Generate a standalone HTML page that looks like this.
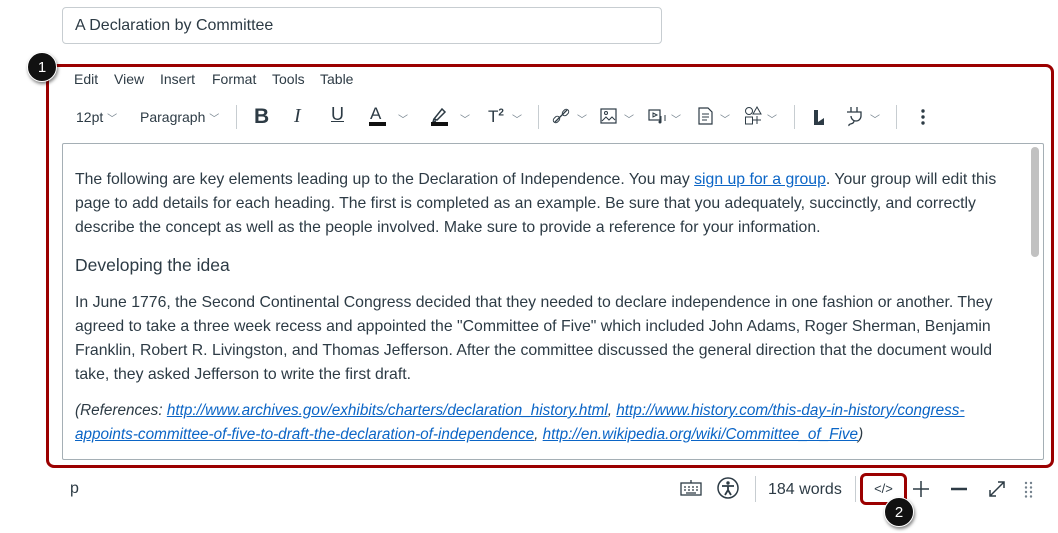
<!DOCTYPE html>
<html><head><meta charset="utf-8"><style>
*{box-sizing:border-box;margin:0;padding:0}
body{width:1058px;height:533px;background:#fff;font-family:"Liberation Sans",sans-serif;color:#2d3b45;position:relative;overflow:hidden}
.abs{position:absolute}
.title{left:62px;top:7px;width:600px;height:37px;border:1px solid #c7cdd1;border-radius:4px;font-size:16px;padding:9px 12px;color:#2d3b45}
.red{left:46px;top:64px;width:1008px;height:404px;border:3px solid #9b0000;border-radius:8px}
.badge{width:30px;height:30px;border-radius:50%;background:#111;color:#fff;font-size:15px;text-align:center;line-height:30px;box-shadow:1px 2px 3px rgba(0,0,0,.5);border:1.5px solid #fff}
.menu span{position:absolute;top:71px;font-size:14px;color:#2d3b45}
.tb{font-size:14px;color:#2d3b45}
.sep{width:1px;height:24px;background:#c7cdd1;top:105px}
.chev{font-size:10px;color:#73818c}
.content{left:62px;top:143px;width:982px;height:317px;border:1px solid #a5afb5;border-radius:2px;overflow:hidden}
.txt{position:absolute;left:12px;font-size:15.8px;white-space:nowrap;line-height:24px;color:#2d3b45}
a{color:#0b65c6;text-decoration:underline}
.scroll{right:4px;top:3px;width:8px;height:110px;background:#c1c1c1;border-radius:4px;position:absolute}
.foot{font-size:16px;color:#2d3b45}
</style></head><body>
<div class="abs title">A Declaration by Committee</div>
<div class="abs red"></div>
<div class="abs badge" style="left:27px;top:52px">1</div>
<div class="menu">
<span style="left:74px">Edit</span><span style="left:114px">View</span><span style="left:160px">Insert</span><span style="left:212px">Format</span><span style="left:272px">Tools</span><span style="left:320px">Table</span>
</div>
<div class="abs tb" style="left:76px;top:109px">12pt <span class="chev">﹀</span></div>
<div class="abs tb" style="left:140px;top:109px">Paragraph <span class="chev">﹀</span></div>
<div class="abs sep" style="left:236px"></div>
<div class="abs" style="left:254px;top:105px;font-size:21px;font-weight:bold">B</div>
<div class="abs" style="left:294px;top:105px;font-size:20px;font-style:italic;font-family:'Liberation Serif',serif">I</div>
<div class="abs" style="left:331px;top:104px;font-size:18px;text-decoration:underline">U</div>
<div class="abs" style="left:370px;top:104px;font-size:17px">A</div><div class="abs" style="left:369px;top:122px;width:17px;height:4px;background:#111"></div>
<div class="abs chev" style="left:398px;top:111px">﹀</div>
<svg class="abs" style="left:430px;top:105px" width="20" height="22"><path d="M4 14 L12 4 L15 7 L7 15 Z M4 14 l-1 3 3-1" fill="none" stroke="#2d3b45" stroke-width="1.5"/><rect x="1" y="17" width="17" height="4" fill="#111"/></svg>
<div class="abs chev" style="left:460px;top:111px">﹀</div>
<div class="abs" style="left:488px;top:107px;font-size:17px">T<sup style="font-size:10px;font-weight:bold">2</sup></div>
<div class="abs chev" style="left:512px;top:111px">﹀</div>
<div class="abs sep" style="left:538px"></div>
<svg class="abs" style="left:552px;top:107px" width="18" height="18"><path d="M3 15 l4-4 M7 11 l4-4 M11 7 l4-4" stroke="#2d3b45" stroke-width="1.3" fill="none"/><rect x="1" y="10" width="7" height="5" rx="2.5" transform="rotate(-45 4.5 12.5)" fill="none" stroke="#2d3b45"/><rect x="10" y="3" width="7" height="5" rx="2.5" transform="rotate(-45 13.5 5.5)" fill="none" stroke="#2d3b45"/></svg>
<div class="abs chev" style="left:577px;top:111px">﹀</div>
<svg class="abs" style="left:600px;top:108px" width="17" height="16"><rect x="1" y="1" width="15" height="14" fill="none" stroke="#2d3b45" stroke-width="1.2"/><circle cx="6" cy="5" r="1.5" fill="none" stroke="#2d3b45"/><path d="M2 13 l4-4 3 3 3-3 3 3" fill="none" stroke="#2d3b45"/></svg>
<div class="abs chev" style="left:624px;top:111px">﹀</div>
<svg class="abs" style="left:648px;top:108px" width="18" height="17"><rect x="1" y="2" width="11" height="10" fill="none" stroke="#2d3b45" stroke-width="1.2"/><path d="M5 5 l4 2 -4 2z" fill="none" stroke="#2d3b45"/><path d="M13 8 v6 M17 7 v6" stroke="#2d3b45"/><circle cx="12" cy="14" r="1.5" fill="#2d3b45"/></svg>
<div class="abs chev" style="left:671px;top:111px">﹀</div>
<svg class="abs" style="left:698px;top:107px" width="15" height="18"><path d="M1 1 h9 l4 4 v12 h-13z" fill="none" stroke="#2d3b45" stroke-width="1.2"/><path d="M4 7h7M4 10h7M4 13h5" stroke="#2d3b45"/></svg>
<div class="abs chev" style="left:720px;top:111px">﹀</div>
<svg class="abs" style="left:744px;top:106px" width="18" height="20"><circle cx="5" cy="5" r="3.5" fill="none" stroke="#2d3b45"/><path d="M13 1 l4 7 h-8z" fill="none" stroke="#2d3b45"/><rect x="1.5" y="11" width="7" height="7" fill="none" stroke="#2d3b45"/><path d="M13 10v8M9 14h8" stroke="#2d3b45"/></svg>
<div class="abs chev" style="left:767px;top:111px">﹀</div>
<div class="abs sep" style="left:794px"></div>
<svg class="abs" style="left:812px;top:108px" width="14" height="18"><path d="M2 2 h4 v12 l6-4 v7 h-10z" fill="#2d3b45"/></svg>
<svg class="abs" style="left:845px;top:106px" width="18" height="21"><path d="M6 1v5M12 1v5M2 6h14v4a5 5 0 0 1-10 0" fill="none" stroke="#2d3b45" stroke-width="1.3"/><path d="M9 15 c0 4 -6 2 -5 5" fill="none" stroke="#2d3b45" stroke-width="1.3"/></svg>
<div class="abs chev" style="left:870px;top:111px">﹀</div>
<div class="abs sep" style="left:896px"></div>
<svg class="abs" style="left:920px;top:108px" width="6" height="18"><circle cx="3" cy="3" r="1.7" fill="#2d3b45"/><circle cx="3" cy="9" r="1.7" fill="#2d3b45"/><circle cx="3" cy="15" r="1.7" fill="#2d3b45"/></svg>

<div class="abs content">
<div class="scroll"></div>
<div class="txt" style="top:24px">The following are key elements leading up to the Declaration of Independence. You may <a>sign up for a group</a>. Your group will edit this</div>
<div class="txt" style="top:48px">page to add details for each heading. The first is completed as an example. Be sure that you adequately, succinctly, and correctly</div>
<div class="txt" style="top:72px">describe the concept as well as the people involved. Make sure to provide a reference for your information.</div>
<div class="txt" style="top:109px;font-size:17.5px">Developing the idea</div>
<div class="txt" style="top:147px">In June 1776, the Second Continental Congress decided that they needed to declare independence in one fashion or another. They</div>
<div class="txt" style="top:171px">agreed to take a three week recess and appointed the "Committee of Five" which included John Adams, Roger Sherman, Benjamin</div>
<div class="txt" style="top:195px">Franklin, Robert R. Livingston, and Thomas Jefferson. After the committee discussed the general direction that the document would</div>
<div class="txt" style="top:219px">take, they asked Jefferson to write the first draft.</div>
<div class="txt" style="top:255px;font-style:italic;font-size:15.3px">(References: <a>http://www.archives.gov/exhibits/charters/declaration_history.html</a>, <a>http://www.history.com/this-day-in-history/congress-</a></div>
<div class="txt" style="top:279px;font-style:italic;font-size:15.3px"><a>appoints-committee-of-five-to-draft-the-declaration-of-independence</a>, <a>http://en.wikipedia.org/wiki/Committee_of_Five</a>)</div>
</div>

<div class="abs foot" style="left:70px;top:480px">p</div>
<svg class="abs" style="left:680px;top:480px" width="22" height="16"><rect x="1" y="3" width="20" height="12" fill="none" stroke="#2d3b45" stroke-width="1.3"/><path d="M4 7h2M8 7h2M12 7h2M16 7h2M4 10h2M8 10h2M12 10h2M16 10h2M6 13h10M11 0v3" stroke="#2d3b45" stroke-width="1.3"/></svg>
<svg class="abs" style="left:717px;top:477px" width="22" height="22"><circle cx="11" cy="11" r="10" fill="none" stroke="#2d3b45" stroke-width="1.5"/><circle cx="11" cy="6" r="1.7" fill="#2d3b45"/><path d="M5 9h12M11 9v4M11 13l-3 5M11 13l3 5" stroke="#2d3b45" stroke-width="1.8" fill="none"/></svg>
<div class="abs" style="left:755px;top:476px;width:1px;height:26px;background:#c7cdd1"></div>
<div class="abs foot" style="left:768px;top:481px;font-size:16px">184 words</div>
<div class="abs" style="left:855px;top:476px;width:1px;height:26px;background:#c7cdd1"></div>
<div class="abs" style="left:860px;top:473px;width:47px;height:32px;border:3px solid #9b0000;border-radius:6px;font-size:13px;text-align:center;line-height:26px">&lt;/&gt;</div>
<div class="abs badge" style="left:884px;top:497px">2</div>
<svg class="abs" style="left:912px;top:480px" width="18" height="18"><path d="M9 1v16M1 9h16" stroke="#2d3b45" stroke-width="1.5"/></svg>
<svg class="abs" style="left:950px;top:480px" width="18" height="18"><path d="M1 9h16" stroke="#2d3b45" stroke-width="2.5"/></svg>
<svg class="abs" style="left:988px;top:480px" width="18" height="18"><path d="M2 16 L16 2 M10 2h6v6 M2 10v6h6" stroke="#2d3b45" stroke-width="1.5" fill="none"/></svg>
<svg class="abs" style="left:1024px;top:481px" width="10" height="18"><g fill="#73818c"><circle cx="2" cy="2" r="1.2"/><circle cx="7" cy="2" r="1.2"/><circle cx="2" cy="6.5" r="1.2"/><circle cx="7" cy="6.5" r="1.2"/><circle cx="2" cy="11" r="1.2"/><circle cx="7" cy="11" r="1.2"/><circle cx="2" cy="15.5" r="1.2"/><circle cx="7" cy="15.5" r="1.2"/></g></svg>
</body></html>
